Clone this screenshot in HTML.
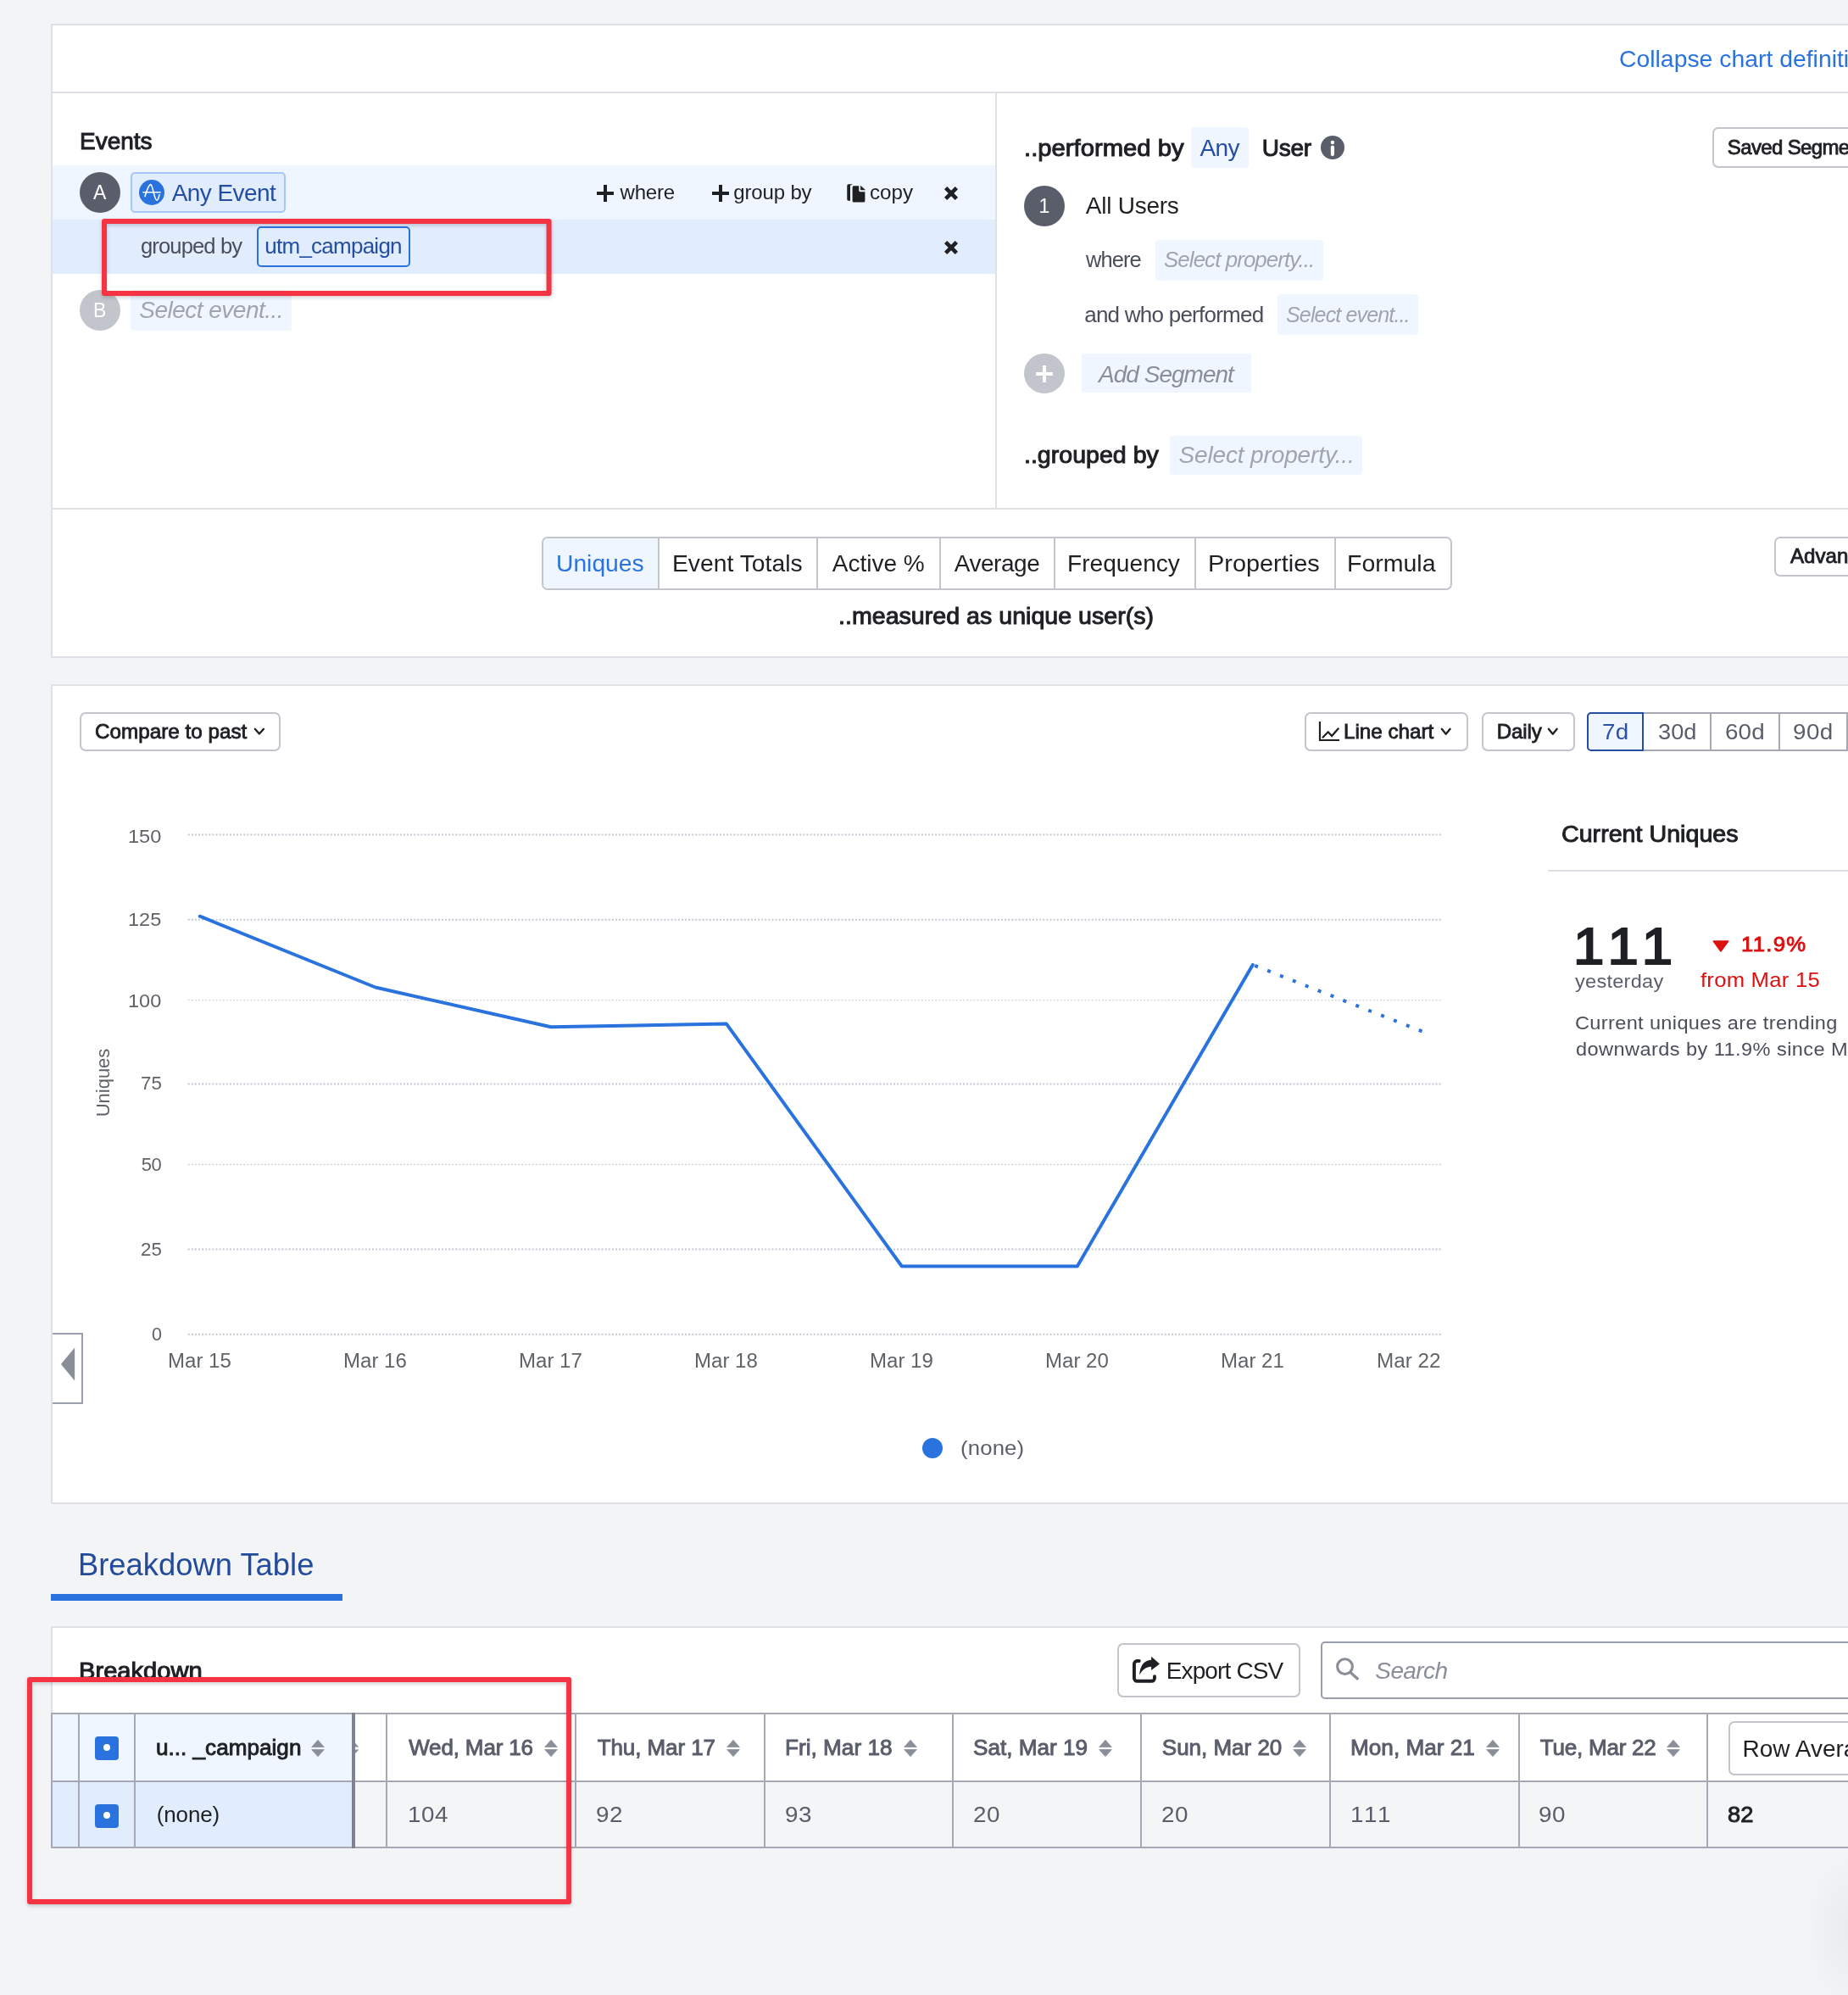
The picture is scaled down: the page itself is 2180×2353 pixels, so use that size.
<!DOCTYPE html>
<html lang="en">
<head>
<meta charset="utf-8">
<title>Event Segmentation</title>
<style>
html,body{margin:0;padding:0}
body{width:2180px;height:2353px;overflow:hidden;background:#f3f4f6;font-family:"Liberation Sans", sans-serif;position:relative}
#root{position:absolute;left:0;top:0;width:2180px;height:2353px;overflow:hidden;will-change:transform;-webkit-font-smoothing:antialiased}
#root section{display:contents}
#root div,#root span,#root svg,#root h1,#root h2,#root h3,#root p{position:absolute;box-sizing:border-box;margin:0;padding:0}
.t{white-space:nowrap;line-height:1;transform-origin:0 50%;font-weight:400}

</style>
</head>
<body>
<div id="root">
<section aria-label="Chart definition">
<div style="left:60.00px;top:28.00px;width:2200.00px;height:748.00px;background:#fff;border:2px solid #dfe1e6;"></div>
<div style="left:62.00px;top:108.00px;width:2198.00px;height:2.00px;background:#dfe1e6;"></div>
<div style="left:62.00px;top:599.00px;width:2198.00px;height:2.00px;background:#dfe1e6;"></div>
<div style="left:1174.00px;top:110.00px;width:2.00px;height:489.00px;background:#dfe1e6;"></div>
<span class="t" style="left:1909.69px;top:55.70px;font-size:28px;color:#2a73de;transform:scaleX(1.0129);">Collapse chart definition</span>
<div style="left:62.00px;top:195.00px;width:1112.00px;height:64.00px;background:#f0f6ff;"></div>
<div style="left:62.00px;top:259.00px;width:1112.00px;height:63.60px;background:#e1ecfd;"></div>
<h2 class="t" style="left:94.00px;top:152.90px;font-size:28px;color:#1e2024;-webkit-text-stroke:1.01px #1e2024;">Events</h2>
<div style="left:94.00px;top:203.00px;width:48.00px;height:48.00px;background:#5a5e6b;border-radius:24px;"></div>
<span class="t" style="left:110.00px;top:216.13px;font-size:23px;color:#fff;">A</span>
<div style="left:154.00px;top:203.00px;width:183.00px;height:48.00px;background:#e1ecfd;border:2px solid #a6c6f7;border-radius:5px;"></div>
<svg style="left:164px;top:212px" width="30" height="30" viewBox="0 0 30 30"><circle cx="15" cy="15" r="15" fill="#2a72de"/><path d="M4.8 14.7H25.2" stroke="#fff" stroke-width="1.4" stroke-linecap="round" fill="none"/><path d="M7 19.6C9 13.5 11.2 5.6 13.6 5.6C16.4 5.6 17.8 24.2 21 24.2C22.6 24.2 23.4 20.4 24 17.8" stroke="#fff" stroke-width="1.6" stroke-linecap="round" fill="none"/></svg>
<span class="t" style="left:202.70px;top:213.80px;font-size:28px;color:#234ea3;letter-spacing:-0.556px;">Any Event</span>
<svg style="left:703.90px;top:218.00px" width="20" height="20" viewBox="0 0 20 20"><path d="M8.0 0h4v8.0h8.0v4h-8.0v8.0h-4v-8.0h-8.0v-4h8.0z" fill="#1e2024"/></svg>
<span class="t" style="left:731.60px;top:215.18px;font-size:24px;color:#1e2024;letter-spacing:-0.205px;">where</span>
<svg style="left:840.00px;top:218.00px" width="20" height="20" viewBox="0 0 20 20"><path d="M8.0 0h4v8.0h8.0v4h-8.0v8.0h-4v-8.0h-8.0v-4h8.0z" fill="#1e2024"/></svg>
<span class="t" style="left:865.20px;top:215.18px;font-size:24px;color:#1e2024;letter-spacing:-0.143px;">group by</span>
<svg style="left:999px;top:217px" width="23" height="23" viewBox="0 0 23 23"><path d="M1.95 0.25H7L4 1.75V19.7H1.95a1.7 1.7 0 0 1-1.7-1.7V1.95a1.7 1.7 0 0 1 1.7-1.7z" fill="#1e2024"/><path d="M8.2 2.2H14.2V7.6a1.6 1.6 0 0 0 1.6 1.6H21.4V19.9a1.6 1.6 0 0 1-1.6 1.6H8.2a1.6 1.6 0 0 1-1.6-1.6V3.8a1.6 1.6 0 0 1 1.6-1.6z" fill="#1e2024"/><path d="M16.3 2.2L21.4 6.9H16.3z" fill="#1e2024" stroke="#1e2024" stroke-width="0.6" stroke-linejoin="round"/></svg>
<span class="t" style="left:1026.29px;top:215.18px;font-size:24px;color:#1e2024;transform:scaleX(1.0061);">copy</span>
<svg style="left:1112.00px;top:218.20px" width="20" height="20" viewBox="-10.0 -10.0 20 20"><path d="M-6.4 -6.4L6.4 6.4M6.4 -6.4L-6.4 6.4" stroke="#1e2024" stroke-width="4.6" stroke-linecap="butt" fill="none"/></svg>
<span class="t" style="left:165.71px;top:277.49px;font-size:26px;color:#4a4e5a;letter-spacing:-0.910px;transform:scaleX(0.9850);">grouped by</span>
<div style="left:303.00px;top:267.00px;width:181.00px;height:48.00px;background:#e1ecfd;border:2px solid #2a73de;border-radius:5px;"></div>
<span class="t" style="left:312.30px;top:277.49px;font-size:26px;color:#234ea3;letter-spacing:-0.752px;">utm_campaign</span>
<svg style="left:1112.00px;top:282.00px" width="20" height="20" viewBox="-10.0 -10.0 20 20"><path d="M-6.4 -6.4L6.4 6.4M6.4 -6.4L-6.4 6.4" stroke="#1e2024" stroke-width="4.6" stroke-linecap="butt" fill="none"/></svg>
<div style="left:94.00px;top:342.00px;width:48.00px;height:48.00px;background:#c3c5cc;border-radius:24px;"></div>
<span class="t" style="left:110.00px;top:355.13px;font-size:23px;color:#fff;">B</span>
<div style="left:154.00px;top:342.00px;width:190.00px;height:48.00px;background:#f0f6ff;border-radius:4px;"></div>
<span class="t" style="left:164.25px;top:352.30px;font-size:28px;color:#a0a4ae;font-style:italic;letter-spacing:-0.511px;">Select event...</span>
<h2 class="t" style="left:1207.64px;top:161.10px;font-size:28px;color:#1e2024;-webkit-text-stroke:1.01px #1e2024;transform:scaleX(1.0449);">..performed by</h2>
<div style="left:1405.00px;top:150.30px;width:67.80px;height:47.30px;background:#f0f6ff;border-radius:4px;"></div>
<span class="t" style="left:1415.50px;top:161.10px;font-size:28px;color:#234ea3;letter-spacing:-0.574px;">Any</span>
<span class="t" style="left:1488.81px;top:161.10px;font-size:28px;color:#1e2024;-webkit-text-stroke:1.01px #1e2024;letter-spacing:-0.268px;">User</span>
<svg style="left:1558px;top:160px" width="28" height="28" viewBox="0 0 28 28"><circle cx="14" cy="14" r="14" fill="#5a5e6b"/><circle cx="13.9" cy="8" r="2.2" fill="#fff"/><rect x="11.8" y="11.6" width="4.2" height="12.6" rx="2.1" fill="#fff"/></svg>
<div style="left:2020.00px;top:150.00px;width:240.00px;height:48.00px;background:#fff;border:2px solid #c3c5cc;border-radius:7px;"></div>
<span class="t" style="left:2037.83px;top:162.48px;font-size:24px;color:#1e2024;-webkit-text-stroke:0.86px #1e2024;letter-spacing:-0.641px;">Saved Segments</span>
<div style="left:1208.00px;top:219.00px;width:48.00px;height:48.00px;background:#5a5e6b;border-radius:24px;"></div>
<span class="t" style="left:1225.50px;top:232.13px;font-size:23px;color:#fff;">1</span>
<span class="t" style="left:1280.80px;top:229.40px;font-size:28px;color:#1e2024;letter-spacing:-0.252px;">All Users</span>
<span class="t" style="left:1280.78px;top:293.39px;font-size:26px;color:#4a4e5a;letter-spacing:-0.910px;transform:scaleX(0.9776);">where</span>
<div style="left:1362.90px;top:282.90px;width:197.80px;height:47.90px;background:#f0f6ff;border-radius:4px;"></div>
<span class="t" style="left:1372.90px;top:293.39px;font-size:26px;color:#a0a4ae;font-style:italic;letter-spacing:-0.910px;transform:scaleX(0.9943);">Select property...</span>
<span class="t" style="left:1279.20px;top:357.89px;font-size:26px;color:#4a4e5a;letter-spacing:-0.754px;">and who performed</span>
<div style="left:1507.00px;top:346.90px;width:166.00px;height:47.90px;background:#f0f6ff;border-radius:4px;"></div>
<span class="t" style="left:1516.90px;top:357.89px;font-size:26px;color:#a0a4ae;font-style:italic;letter-spacing:-0.910px;transform:scaleX(0.9640);">Select event...</span>
<div style="left:1208.00px;top:417.00px;width:48.00px;height:47.00px;background:#c3c5cc;border-radius:24px;"></div>
<svg style="left:1222.00px;top:430.50px" width="20" height="20" viewBox="0 0 20 20"><path d="M8.0 0h4v8.0h8.0v4h-8.0v8.0h-4v-8.0h-8.0v-4h8.0z" fill="#fff"/></svg>
<div style="left:1276.10px;top:417.30px;width:199.60px;height:46.20px;background:#f0f6ff;border-radius:4px;"></div>
<span class="t" style="left:1296.00px;top:427.80px;font-size:28px;color:#8a8e99;font-style:italic;letter-spacing:-0.980px;">Add Segment</span>
<h2 class="t" style="left:1207.67px;top:523.40px;font-size:28px;color:#1e2024;-webkit-text-stroke:1.01px #1e2024;transform:scaleX(1.0202);">..grouped by</h2>
<div style="left:1379.90px;top:514.30px;width:227.00px;height:45.60px;background:#f0f6ff;border-radius:4px;"></div>
<span class="t" style="left:1390.40px;top:523.40px;font-size:28px;color:#a0a4ae;font-style:italic;letter-spacing:-0.129px;">Select property...</span>
<div style="left:639.00px;top:633.30px;width:1073.50px;height:62.30px;background:#fff;border:2px solid #c3c5cc;border-radius:7px;"></div>
<div style="left:641.00px;top:635.30px;width:135.00px;height:58.30px;background:#f0f6ff;border-radius:5px 0 0 5px;"></div>
<div style="left:776.00px;top:635.30px;width:2.00px;height:58.30px;background:#c3c5cc;"></div>
<div style="left:963.00px;top:635.30px;width:2.00px;height:58.30px;background:#c3c5cc;"></div>
<div style="left:1108.00px;top:635.30px;width:2.00px;height:58.30px;background:#c3c5cc;"></div>
<div style="left:1243.00px;top:635.30px;width:2.00px;height:58.30px;background:#c3c5cc;"></div>
<div style="left:1409.00px;top:635.30px;width:2.00px;height:58.30px;background:#c3c5cc;"></div>
<div style="left:1573.50px;top:635.30px;width:2.00px;height:58.30px;background:#c3c5cc;"></div>
<span class="t" style="left:655.98px;top:650.50px;font-size:28px;color:#2a73de;transform:scaleX(1.0087);">Uniques</span>
<span class="t" style="left:792.68px;top:650.50px;font-size:28px;color:#1e2024;transform:scaleX(1.0105);">Event Totals</span>
<span class="t" style="left:981.80px;top:650.50px;font-size:28px;color:#1e2024;">Active %</span>
<span class="t" style="left:1125.70px;top:650.50px;font-size:28px;color:#1e2024;letter-spacing:-0.452px;">Average</span>
<span class="t" style="left:1259.29px;top:650.50px;font-size:28px;color:#1e2024;transform:scaleX(1.0047);">Frequency</span>
<span class="t" style="left:1425.24px;top:650.50px;font-size:28px;color:#1e2024;transform:scaleX(1.0320);">Properties</span>
<span class="t" style="left:1589.46px;top:650.50px;font-size:28px;color:#1e2024;transform:scaleX(1.0176);">Formula</span>
<span class="t" style="left:989.47px;top:713.40px;font-size:28px;color:#1e2024;-webkit-text-stroke:1.01px #1e2024;transform:scaleX(1.0217);">..measured as unique user(s)</span>
<div style="left:2093.00px;top:633.00px;width:167.00px;height:47.00px;background:#fff;border:2px solid #c3c5cc;border-radius:7px;"></div>
<span class="t" style="left:2111.73px;top:644.28px;font-size:24px;color:#1e2024;-webkit-text-stroke:0.86px #1e2024;transform:scaleX(1.0050);">Advanced</span>
</section>
<section aria-label="Chart">
<div style="left:60.00px;top:807.00px;width:2200.00px;height:967.00px;background:#fff;border:2px solid #dfe1e6;"></div>
<div style="left:94.00px;top:840.00px;width:237.00px;height:46.00px;background:#fff;border:2px solid #c3c5cc;border-radius:7px;"></div>
<span class="t" style="left:112.12px;top:851.38px;font-size:24px;color:#1e2024;-webkit-text-stroke:0.86px #1e2024;transform:scaleX(1.0106);">Compare to past</span>
<svg style="left:298.40px;top:857.00px" width="15.80" height="11.30" viewBox="-2 -2 15.80 11.30"><path d="M0.8 0.8L5.90 6.50L11.00 0.8" stroke="#1e2024" stroke-width="2.3" fill="none" stroke-linecap="round" stroke-linejoin="round"/></svg>
<div style="left:1539.00px;top:840.00px;width:193.00px;height:46.00px;background:#fff;border:2px solid #c3c5cc;border-radius:7px;"></div>
<svg style="left:1555px;top:851px" width="26" height="24" viewBox="0 0 26 24"><path d="M1.95 0V21.95H25" stroke="#1e2024" stroke-width="2.1" fill="none"/><path d="M4.9 19.2L11.7 12.3L16.1 17.1L24.2 7.8" stroke="#1e2024" stroke-width="2.3" fill="none" stroke-linejoin="miter"/></svg>
<span class="t" style="left:1585.43px;top:851.38px;font-size:24px;color:#1e2024;-webkit-text-stroke:0.86px #1e2024;transform:scaleX(1.0086);">Line chart</span>
<svg style="left:1698.40px;top:856.80px" width="15.40" height="11.60" viewBox="-2 -2 15.40 11.60"><path d="M0.8 0.8L5.70 6.80L10.60 0.8" stroke="#1e2024" stroke-width="2.3" fill="none" stroke-linecap="round" stroke-linejoin="round"/></svg>
<div style="left:1748.00px;top:840.00px;width:110.00px;height:46.00px;background:#fff;border:2px solid #c3c5cc;border-radius:7px;"></div>
<span class="t" style="left:1765.83px;top:851.38px;font-size:24px;color:#1e2024;-webkit-text-stroke:0.86px #1e2024;letter-spacing:-0.076px;">Daily</span>
<svg style="left:1824.40px;top:856.80px" width="15.50" height="11.60" viewBox="-2 -2 15.50 11.60"><path d="M0.8 0.8L5.75 6.80L10.70 0.8" stroke="#1e2024" stroke-width="2.3" fill="none" stroke-linecap="round" stroke-linejoin="round"/></svg>
<div style="left:1872.00px;top:840.00px;width:388.00px;height:46.00px;background:#fff;border:2px solid #a6a9b3;border-radius:5px;"></div>
<div style="left:2017.20px;top:842.00px;width:2.00px;height:42.00px;background:#a6a9b3;"></div>
<div style="left:2097.90px;top:842.00px;width:2.00px;height:42.00px;background:#a6a9b3;"></div>
<div style="left:2178.30px;top:842.00px;width:2.00px;height:42.00px;background:#a6a9b3;"></div>
<div style="left:1872.00px;top:840.00px;width:67.00px;height:46.00px;background:#f0f6ff;border:2px solid #234ea3;border-radius:5px 0 0 5px;"></div>
<span class="t" style="left:1890.33px;top:849.69px;font-size:26px;color:#2a52a8;letter-spacing:0.269px;transform:scaleX(1.0700);">7d</span>
<span class="t" style="left:1955.70px;top:849.69px;font-size:26px;color:#5a5e6b;transform:scaleX(1.0472);">30d</span>
<span class="t" style="left:2034.93px;top:849.69px;font-size:26px;color:#5a5e6b;letter-spacing:0.101px;transform:scaleX(1.0700);">60d</span>
<span class="t" style="left:2114.63px;top:849.69px;font-size:26px;color:#5a5e6b;letter-spacing:0.428px;transform:scaleX(1.0700);">90d</span>
<svg style="left:0;top:940px" width="1760" height="720" viewBox="0 940 1760 720"><path d="M221.7 984.5H1700.2" stroke="#c2c9d3" stroke-width="2" stroke-dasharray="2 2.1" fill="none"/><path d="M221.7 1084.7H1700.2" stroke="#c2c9d3" stroke-width="2" stroke-dasharray="2 2.1" fill="none"/><path d="M221.7 1179.7H1700.2" stroke="#cdd3db" stroke-width="1.3" stroke-dasharray="2 2.1" fill="none"/><path d="M221.7 1278.6H1700.2" stroke="#c2c9d3" stroke-width="2" stroke-dasharray="2 2.1" fill="none"/><path d="M221.7 1373.5H1700.2" stroke="#cdd3db" stroke-width="1.3" stroke-dasharray="2 2.1" fill="none"/><path d="M221.7 1473.4H1700.2" stroke="#c2c9d3" stroke-width="2" stroke-dasharray="2 2.1" fill="none"/><path d="M221.7 1573.7H1700.2" stroke="#c2c9d3" stroke-width="2" stroke-dasharray="2 2.1" fill="none"/><polyline points="235.8,1080.7 442.8,1164.5 649.8,1211.3 856.8,1207.4 1063.8,1493.5 1270.8,1493.5 1477.8,1137.9" fill="none" stroke="#2a73de" stroke-width="4" stroke-linejoin="round" stroke-linecap="round"/><path d="M1477.8 1137.9L1684.8 1219.3" stroke="#2a73de" stroke-width="4" stroke-dasharray="4 12" stroke-dashoffset="-2.6" fill="none"/></svg>
<span class="t" style="left:151.33px;top:975.88px;font-size:22px;color:#5f6368;letter-spacing:0.022px;transform:scaleX(1.0700);">150</span>
<span class="t" style="left:151.33px;top:1074.08px;font-size:22px;color:#5f6368;letter-spacing:0.022px;transform:scaleX(1.0700);">125</span>
<span class="t" style="left:151.33px;top:1169.68px;font-size:22px;color:#5f6368;letter-spacing:0.022px;transform:scaleX(1.0700);">100</span>
<span class="t" style="left:165.78px;top:1267.08px;font-size:22px;color:#5f6368;transform:scaleX(1.0157);">75</span>
<span class="t" style="left:166.80px;top:1363.48px;font-size:22px;color:#5f6368;letter-spacing:-0.635px;">50</span>
<span class="t" style="left:165.78px;top:1463.38px;font-size:22px;color:#5f6368;transform:scaleX(1.0157);">25</span>
<span class="t" style="left:179.40px;top:1563.38px;font-size:22px;color:#5f6368;letter-spacing:-0.770px;transform:scaleX(0.9795);">0</span>
<span class="t" style="left:81.74px;top:1265.58px;font-size:22px;color:#5f6368;transform:rotate(-90deg);transform-origin:50% 50%;">Uniques</span>
<span class="t" style="left:198.25px;top:1593.53px;font-size:23px;color:#5f6368;transform:scaleX(1.0460);">Mar 15</span>
<span class="t" style="left:405.25px;top:1593.53px;font-size:23px;color:#5f6368;transform:scaleX(1.0460);">Mar 16</span>
<span class="t" style="left:612.25px;top:1593.53px;font-size:23px;color:#5f6368;transform:scaleX(1.0460);">Mar 17</span>
<span class="t" style="left:819.25px;top:1593.53px;font-size:23px;color:#5f6368;transform:scaleX(1.0460);">Mar 18</span>
<span class="t" style="left:1026.25px;top:1593.53px;font-size:23px;color:#5f6368;transform:scaleX(1.0460);">Mar 19</span>
<span class="t" style="left:1233.25px;top:1593.53px;font-size:23px;color:#5f6368;transform:scaleX(1.0460);">Mar 20</span>
<span class="t" style="left:1440.25px;top:1593.53px;font-size:23px;color:#5f6368;transform:scaleX(1.0460);">Mar 21</span>
<span class="t" style="left:1624.35px;top:1593.53px;font-size:23px;color:#5f6368;transform:scaleX(1.0546);">Mar 22</span>
<div style="left:62.00px;top:1572.00px;width:36.00px;height:84.00px;background:#fff;border:2px solid #9b9fae;border-left:0;"></div>
<svg style="left:70px;top:1589px" width="20" height="40" viewBox="0 0 20 40"><path d="M18.1 0.4V39.6L1.9 20z" fill="#8a8e99"/></svg>
<div style="left:1087.60px;top:1695.70px;width:24.00px;height:24.00px;background:#2a73de;border-radius:12px;"></div>
<span class="t" style="left:1132.73px;top:1696.28px;font-size:24px;color:#5a5e6b;letter-spacing:0.168px;transform:scaleX(1.0700);">(none)</span>
<h3 class="t" style="left:1841.65px;top:970.84px;font-size:27px;color:#1e2024;-webkit-text-stroke:0.97px #1e2024;transform:scaleX(1.0609);">Current Uniques</h3>
<div style="left:1826.00px;top:1026.40px;width:434.00px;height:2.00px;background:#dfe1e6;"></div>
<span class="t" style="left:1855.90px;top:1085.96px;font-size:61px;color:#1e2024;-webkit-text-stroke:2.2px #1e2024;letter-spacing:8.385px;transform:scaleX(1.0700);">111</span>
<span class="t" style="left:1858.20px;top:1147.18px;font-size:22px;color:#5a5e6b;letter-spacing:0.250px;transform:scaleX(1.0700);">yesterday</span>
<svg style="left:2020px;top:1108px" width="20" height="16" viewBox="0 0 20 16"><path d="M1.6 2.2H18.4L10 13.6z" fill="#dd0f0f" stroke="#dd0f0f" stroke-width="2" stroke-linejoin="round"/></svg>
<span class="t" style="left:2053.79px;top:1102.28px;font-size:24px;color:#dd0f0f;-webkit-text-stroke:0.86px #dd0f0f;letter-spacing:1.216px;transform:scaleX(1.0700);">11.9%</span>
<span class="t" style="left:2006.20px;top:1143.78px;font-size:24px;color:#dd0f0f;letter-spacing:0.211px;transform:scaleX(1.0700);">from Mar 15</span>
<span class="t" style="left:1857.53px;top:1196.48px;font-size:22px;color:#4a4e5a;letter-spacing:0.337px;transform:scaleX(1.0700);">Current uniques are trending</span>
<span class="t" style="left:1858.60px;top:1226.98px;font-size:22px;color:#4a4e5a;letter-spacing:0.412px;transform:scaleX(1.0700);">downwards by 11.9% since Mar 15.</span>
</section>
<section aria-label="Breakdown table">
<h2 class="t" style="left:91.58px;top:1827.53px;font-size:36px;color:#224b9b;transform:scaleX(1.0104);">Breakdown Table</h2>
<div style="left:60.00px;top:1880.00px;width:344.00px;height:8.00px;background:#2a73de;"></div>
<div style="left:60.00px;top:1918.00px;width:2200.00px;height:262.00px;background:#fff;border:2px solid #dfe1e6;"></div>
<h3 class="t" style="left:93.14px;top:1957.20px;font-size:28px;color:#1e2024;-webkit-text-stroke:1.01px #1e2024;transform:scaleX(1.0406);">Breakdown</h3>
<div style="left:1318.00px;top:1938.00px;width:216.00px;height:64.00px;background:#fff;border:2px solid #c3c5cc;border-radius:7px;"></div>
<svg style="left:1335px;top:1953px" width="34" height="33" viewBox="0 0 34 33"><path d="M8.85 6H6.4a3.45 3.45 0 0 0-3.45 3.45V26.35a3.45 3.45 0 0 0 3.45 3.45H23.55a3.45 3.45 0 0 0 3.45-3.45V24.15" stroke="#1e2024" stroke-width="3.9" fill="none" stroke-linecap="round"/><path d="M23.1 0.8L33 9.5L23.1 17V12.8C17 12.8 12.5 16.5 9.2 22.8C9.6 12 14.5 5.2 23.1 4.8z" fill="#1e2024"/></svg>
<span class="t" style="left:1375.70px;top:1956.90px;font-size:28px;color:#1e2024;letter-spacing:-0.856px;">Export CSV</span>
<div style="left:1558.00px;top:1936.00px;width:702.00px;height:68.00px;background:#fff;border:2px solid #9a9eaa;border-radius:5px;"></div>
<svg style="left:1575px;top:1955px" width="30" height="29" viewBox="0 0 30 29"><circle cx="11.5" cy="10.6" r="8.9" stroke="#8a8e99" stroke-width="3.1" fill="none"/><path d="M17.9 17.4L27.2 25.8" stroke="#8a8e99" stroke-width="3.3" fill="none"/></svg>
<span class="t" style="left:1622.30px;top:1956.90px;font-size:28px;color:#8a8e99;font-style:italic;letter-spacing:-0.589px;">Search</span>
<div style="left:62.00px;top:2022.00px;width:353.00px;height:78.00px;background:#f0f6ff;"></div>
<div style="left:62.00px;top:2102.00px;width:353.00px;height:76.00px;background:#e1ecfd;"></div>
<div style="left:418.60px;top:2102.00px;width:1841.40px;height:76.00px;background:#f4f5f7;"></div>
<div style="left:60.00px;top:2020.00px;width:2200.00px;height:2.00px;background:#a6a9b3;"></div>
<div style="left:60.00px;top:2100.00px;width:2200.00px;height:2.00px;background:#a6a9b3;"></div>
<div style="left:60.00px;top:2178.00px;width:2200.00px;height:2.00px;background:#a6a9b3;"></div>
<div style="left:60.00px;top:2020.00px;width:2.00px;height:160.00px;background:#a6a9b3;"></div>
<div style="left:92.00px;top:2020.00px;width:2.00px;height:160.00px;background:#a6a9b3;"></div>
<div style="left:158.00px;top:2020.00px;width:2.00px;height:160.00px;background:#a6a9b3;"></div>
<div style="left:455.20px;top:2020.00px;width:2.00px;height:160.00px;background:#a6a9b3;"></div>
<div style="left:678.00px;top:2020.00px;width:2.00px;height:160.00px;background:#a6a9b3;"></div>
<div style="left:900.50px;top:2020.00px;width:2.00px;height:160.00px;background:#a6a9b3;"></div>
<div style="left:1123.00px;top:2020.00px;width:2.00px;height:160.00px;background:#a6a9b3;"></div>
<div style="left:1345.00px;top:2020.00px;width:2.00px;height:160.00px;background:#a6a9b3;"></div>
<div style="left:1568.00px;top:2020.00px;width:2.00px;height:160.00px;background:#a6a9b3;"></div>
<div style="left:1790.50px;top:2020.00px;width:2.00px;height:160.00px;background:#a6a9b3;"></div>
<div style="left:2013.00px;top:2020.00px;width:2.00px;height:160.00px;background:#a6a9b3;"></div>
<div style="left:415.00px;top:2020.00px;width:3.60px;height:160.00px;background:#7f8390;"></div>
<div style="left:112.00px;top:2048.00px;width:28.00px;height:28.00px;background:#2a72de;border-radius:4px;"><div style="left:10px;top:9.4px;width:8px;height:8px;border-radius:4px;background:#fff"></div></div>
<div style="left:112.00px;top:2128.00px;width:28.00px;height:28.00px;background:#2a72de;border-radius:4px;"><div style="left:10px;top:9.4px;width:8px;height:8px;border-radius:4px;background:#fff"></div></div>
<span class="t" style="left:184.37px;top:2048.39px;font-size:26px;color:#1e2024;-webkit-text-stroke:0.94px #1e2024;transform:scaleX(1.0052);">u... _campaign</span>
<svg style="left:367.30px;top:2052.00px" width="16" height="20" viewBox="0 0 16 20"><path d="M8 0.3L15.3 8.6H0.7z M8 19.7L15.3 11.6H0.7z" fill="#8a8e99" stroke="#8a8e99" stroke-width="0.8" stroke-linejoin="round"/></svg>
<span class="t" style="left:184.70px;top:2126.89px;font-size:26px;color:#1e2024;letter-spacing:-0.120px;">(none)</span>
<svg style="left:418.6px;top:2052px" width="5" height="20" viewBox="11 0 5 20"><path d="M8 0.3L15.3 8.6H0.7z M8 19.7L15.3 11.6H0.7z" fill="#8a8e99"/></svg>
<span class="t" style="left:482.17px;top:2048.39px;font-size:26px;color:#5a5e6b;-webkit-text-stroke:0.94px #5a5e6b;letter-spacing:-0.144px;">Wed, Mar 16</span>
<svg style="left:642.10px;top:2052.00px" width="16" height="20" viewBox="0 0 16 20"><path d="M8 0.3L15.3 8.6H0.7z M8 19.7L15.3 11.6H0.7z" fill="#8a8e99" stroke="#8a8e99" stroke-width="0.8" stroke-linejoin="round"/></svg>
<span class="t" style="left:480.63px;top:2126.99px;font-size:26px;color:#5a5e6b;letter-spacing:0.442px;transform:scaleX(1.0700);">104</span>
<span class="t" style="left:704.67px;top:2048.39px;font-size:26px;color:#5a5e6b;-webkit-text-stroke:0.94px #5a5e6b;letter-spacing:-0.085px;">Thu, Mar 17</span>
<svg style="left:857.00px;top:2052.00px" width="16" height="20" viewBox="0 0 16 20"><path d="M8 0.3L15.3 8.6H0.7z M8 19.7L15.3 11.6H0.7z" fill="#8a8e99" stroke="#8a8e99" stroke-width="0.8" stroke-linejoin="round"/></svg>
<span class="t" style="left:703.13px;top:2126.99px;font-size:26px;color:#5a5e6b;letter-spacing:0.391px;transform:scaleX(1.0700);">92</span>
<span class="t" style="left:925.86px;top:2048.39px;font-size:26px;color:#5a5e6b;-webkit-text-stroke:0.94px #5a5e6b;transform:scaleX(1.0067);">Fri, Mar 18</span>
<svg style="left:1065.50px;top:2052.00px" width="16" height="20" viewBox="0 0 16 20"><path d="M8 0.3L15.3 8.6H0.7z M8 19.7L15.3 11.6H0.7z" fill="#8a8e99" stroke="#8a8e99" stroke-width="0.8" stroke-linejoin="round"/></svg>
<span class="t" style="left:926.33px;top:2126.99px;font-size:26px;color:#5a5e6b;letter-spacing:0.391px;transform:scaleX(1.0700);">93</span>
<span class="t" style="left:1148.47px;top:2048.39px;font-size:26px;color:#5a5e6b;-webkit-text-stroke:0.94px #5a5e6b;transform:scaleX(1.0054);">Sat, Mar 19</span>
<svg style="left:1295.80px;top:2052.00px" width="16" height="20" viewBox="0 0 16 20"><path d="M8 0.3L15.3 8.6H0.7z M8 19.7L15.3 11.6H0.7z" fill="#8a8e99" stroke="#8a8e99" stroke-width="0.8" stroke-linejoin="round"/></svg>
<span class="t" style="left:1147.93px;top:2126.99px;font-size:26px;color:#5a5e6b;letter-spacing:0.391px;transform:scaleX(1.0700);">20</span>
<span class="t" style="left:1370.87px;top:2048.39px;font-size:26px;color:#5a5e6b;-webkit-text-stroke:0.94px #5a5e6b;letter-spacing:-0.021px;">Sun, Mar 20</span>
<svg style="left:1524.80px;top:2052.00px" width="16" height="20" viewBox="0 0 16 20"><path d="M8 0.3L15.3 8.6H0.7z M8 19.7L15.3 11.6H0.7z" fill="#8a8e99" stroke="#8a8e99" stroke-width="0.8" stroke-linejoin="round"/></svg>
<span class="t" style="left:1370.33px;top:2126.99px;font-size:26px;color:#5a5e6b;letter-spacing:0.391px;transform:scaleX(1.0700);">20</span>
<span class="t" style="left:1592.96px;top:2048.39px;font-size:26px;color:#5a5e6b;-webkit-text-stroke:0.94px #5a5e6b;transform:scaleX(1.0061);">Mon, Mar 21</span>
<svg style="left:1752.60px;top:2052.00px" width="16" height="20" viewBox="0 0 16 20"><path d="M8 0.3L15.3 8.6H0.7z M8 19.7L15.3 11.6H0.7z" fill="#8a8e99" stroke="#8a8e99" stroke-width="0.8" stroke-linejoin="round"/></svg>
<span class="t" style="left:1593.43px;top:2126.99px;font-size:26px;color:#5a5e6b;letter-spacing:2.372px;transform:scaleX(1.0700);">111</span>
<span class="t" style="left:1816.77px;top:2048.39px;font-size:26px;color:#5a5e6b;-webkit-text-stroke:0.94px #5a5e6b;letter-spacing:-0.218px;">Tue, Mar 22</span>
<svg style="left:1966.30px;top:2052.00px" width="16" height="20" viewBox="0 0 16 20"><path d="M8 0.3L15.3 8.6H0.7z M8 19.7L15.3 11.6H0.7z" fill="#8a8e99" stroke="#8a8e99" stroke-width="0.8" stroke-linejoin="round"/></svg>
<span class="t" style="left:1815.23px;top:2126.99px;font-size:26px;color:#5a5e6b;letter-spacing:0.391px;transform:scaleX(1.0700);">90</span>
<div style="left:2039.00px;top:2030.00px;width:221.00px;height:64.00px;background:#fff;border:2px solid #c3c5cc;border-radius:7px;"></div>
<span class="t" style="left:2055.50px;top:2048.50px;font-size:28px;color:#1e2024;">Row Average</span>
<span class="t" style="left:2038.34px;top:2126.99px;font-size:26px;color:#1e2024;-webkit-text-stroke:0.94px #1e2024;transform:scaleX(1.0493);">82</span>
<div style="left:2130.00px;top:2185.00px;width:50.00px;height:168.00px;background:radial-gradient(ellipse at 100% 55%, rgba(20,20,40,.04), rgba(20,20,40,0) 72%);"></div>
</section>
<svg style="left:109.50px;top:247.80px;filter:drop-shadow(0 2px 2px rgba(0,0,0,.18))" width="550.60" height="110.90" viewBox="-10 -10 550.60 110.90"><rect x="3" y="3" width="524.60" height="84.90" fill="none" stroke="#f53342" stroke-width="6" stroke-linejoin="round"/></svg>
<svg style="left:22.10px;top:1967.60px;filter:drop-shadow(0 2px 2px rgba(0,0,0,.18))" width="662.10" height="287.90" viewBox="-10 -10 662.10 287.90"><rect x="3" y="3" width="636.10" height="261.90" fill="none" stroke="#f53342" stroke-width="6" stroke-linejoin="round"/></svg>
</div>
</body>
</html>
